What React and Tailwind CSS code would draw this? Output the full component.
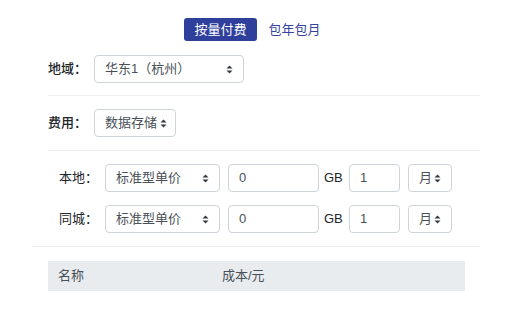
import React from "react";

const font = { fontFamily: '"Liberation Sans", "Noto Sans CJK SC", sans-serif' };

function Caret() {
  return (
    <svg width="7" height="9" viewBox="0 0 7 9" className="shrink-0">
      <path d="M3.5 0.5L6.5 3.5H0.5Z" fill="#343a40" />
      <path d="M3.5 8.5L0.5 5.5H6.5Z" fill="#343a40" />
    </svg>
  );
}

function Select({ label, className }) {
  return (
    <div
      className={`flex h-[28px] items-center justify-between whitespace-nowrap rounded-[4px] border border-[#ced4da] bg-white pl-[10px] text-[13px] text-[#495057] ${className}`}
    >
      <span>{label}</span>
      <Caret />
    </div>
  );
}

function Input({ value, className }) {
  return (
    <div
      className={`flex h-[28px] items-center rounded-[4px] border border-[#ced4da] bg-white px-[10px] text-[13px] text-[#495057] ${className}`}
    >
      {value}
    </div>
  );
}

function StorageRow({ label }) {
  return (
    <div className="flex items-center">
      <span className="w-[46px] text-[13px] text-[#212529]">{label}</span>
      <Select label="标准型单价" className="w-[115px] pr-[10px]" />
      <Input value="0" className="ml-[8px] w-[91px]" />
      <span className="ml-[5px] w-[25px] text-[13px] text-[#212529]">GB</span>
      <Input value="1" className="w-[51px]" />
      <Select label="月" className="ml-[8px] w-[44px] pr-[10px]" />
    </div>
  );
}

export default function App() {
  return (
    <div className="min-h-[320px] w-[512px] bg-white" style={font}>
      <div className="ml-[32px] w-[448px] pt-[18px]">
        {/* tabs */}
        <div className="flex justify-center pl-[3px]">
          <button className="h-[23px] rounded-[3px] bg-[#2f3f9c] px-[10px] text-[13px] text-white">
            按量付费
          </button>
          <button className="h-[23px] pl-[12px] pr-[10px] text-[13px] text-[#34449f]">包年包月</button>
        </div>

        <div className="pl-[16px]">
          <div className="flex items-center pt-[14px] pb-[12px]">
            <span className="w-[46px] text-[13px] font-medium text-[#212529]">地域：</span>
            <Select label="华东1（杭州）" className="w-[150px] pr-[10px]" />
          </div>
          <div className="border-t border-[#eceef0]" />
          <div className="flex items-center pt-[13px] pb-[13px]">
            <span className="w-[46px] text-[13px] font-medium text-[#212529]">费用：</span>
            <Select label="数据存储" className="gap-[3px] pr-[8px]" />
          </div>
          <div className="border-t border-[#eceef0]" />
          <div className="flex flex-col gap-[13px] pl-[11px] pt-[13px] pb-[13px]">
            <StorageRow label="本地：" />
            <StorageRow label="同城：" />
          </div>
        </div>
        <div className="border-t border-[#eceef0]" />

        <div className="mt-[14px] ml-[16px] flex h-[30px] w-[417px] items-center bg-[#e9ecef] text-[13px] text-[#495057]">
          <span className="w-[174px] pl-[10px]">名称</span>
          <span>成本/元</span>
        </div>
      </div>
    </div>
  );
}
